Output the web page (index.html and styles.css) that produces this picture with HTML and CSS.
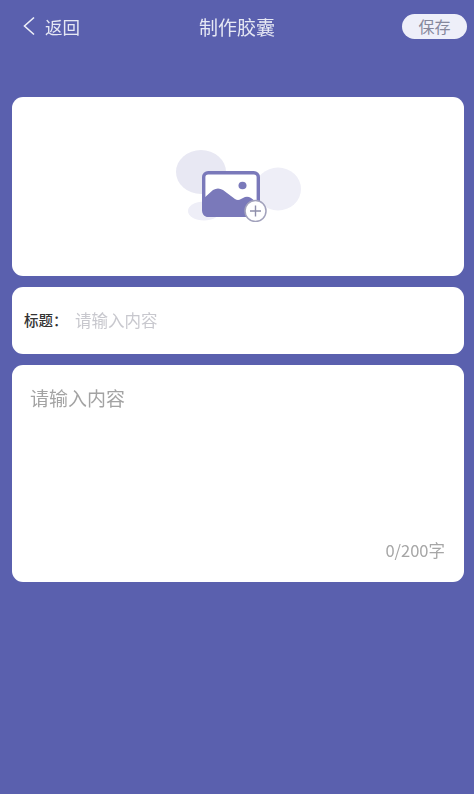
FILE: index.html
```html
<!DOCTYPE html>
<html lang="zh">
<head>
<meta charset="utf-8">
<title>制作胶囊</title>
<link rel="stylesheet" href="styles.css">
</head>
<body>
<div class="page">
  <header class="topbar">
    <div class="back">
      <svg class="back-icon" viewBox="0 0 14 20" width="14" height="20"><path d="M12 1.500 2.500 10l9.500 8.500" fill="none" stroke="#eef0f8" stroke-width="1.600"/></svg>
      <span class="back-text">返回</span>
    </div>
    <div class="title">制作胶囊</div>
    <div class="save">保存</div>
  </header>
  <main class="content">
    <section class="card upload">
      <svg class="upload-icon" viewBox="0 0 128 72" width="128" height="72">
        <ellipse cx="26" cy="22" rx="25" ry="22" fill="#e8e8f3"/>
        <ellipse cx="103" cy="39" rx="23" ry="21.500" fill="#eeeef7"/>
        <ellipse cx="29" cy="61" rx="16" ry="9.500" fill="#eeeef7"/>
        <rect x="28.700" y="22.700" width="54.600" height="42.600" rx="4.500" fill="#fff" stroke="#7a79ba" stroke-width="3.400"/>
        <path d="M28 49 38 40Q43 37 48 40L60 49Q63 51 66 49L70 47Q73 46 76 48L84 54V62A5 5 0 0 1 79 67H33A5 5 0 0 1 28 62Z" fill="#7a79ba"/>
        <ellipse cx="67.500" cy="35.500" rx="4" ry="3.800" fill="#7a79ba"/>
        <circle cx="80.500" cy="61" r="10.500" fill="#fff" stroke="#a2a2bc" stroke-width="1.500"/>
        <path d="M80.500 55.500v11M75 61h11" stroke="#8f8fab" stroke-width="1.400" fill="none"/>
      </svg>
    </section>
    <section class="card title-row">
      <span class="label">标题：</span>
      <span class="placeholder">请输入内容</span>
    </section>
    <section class="card body-input">
      <div class="body-placeholder">请输入内容</div>
      <div class="counter">0/200字</div>
    </section>
  </main>
</div>
</body>
</html>
```
FILE: styles.css
```css
* { box-sizing: border-box; }
html, body { margin: 0; padding: 0; }
body {
  font-family: "Noto Sans CJK SC", "Noto Sans", sans-serif;
  background: #5a60ae;
}
.page {
  width: 474px;
  height: 794px;
  overflow: hidden;
  background: #5a60ae;
}
.topbar {
  height: 97px;
  padding: 14px 7px 0;
  display: grid;
  grid-template-columns: 1fr auto 1fr;
  align-items: start;
}
.back {
  display: flex;
  align-items: center;
  gap: 9px;
  height: 25px;
  padding-left: 15px;
}
.back-icon { display: block; margin-top: -2px; }
.back-text {
  font-size: 17.500px;
  line-height: 25px;
  color: #e6e8f4;
  filter: blur(0.3px);
}
.title {
  font-size: 19px;
  line-height: 25px;
  color: #e6e8f4;
  filter: blur(0.3px);
}
.save {
  justify-self: end;
  width: 65px;
  height: 25px;
  border-radius: 12.500px;
  background: #eeeff9;
  color: #85879c;
  font-size: 16px;
  line-height: 25px;
  text-align: center;
}
.content {
  padding: 0 10px 0 12px;
  display: flex;
  flex-direction: column;
  gap: 11px;
}
.card {
  background: #fff;
  border-radius: 11px;
}
.upload {
  height: 179px;
  display: flex;
  justify-content: center;
  padding: 53px 0 0 0;
}
.upload-icon { display: block; margin-left: 2px; filter: blur(0.5px); }
.title-row {
  height: 67px;
  padding: 0 12px 2px;
  display: flex;
  align-items: center;
}
.label {
  font-size: 14.500px;
  font-weight: 500;
  color: #333;
  width: 51px;
  white-space: nowrap;
}
.placeholder {
  font-size: 16.500px;
  color: #c8c8ce;
  filter: blur(0.3px);
}
.body-input {
  height: 217px;
  padding: 20px 19px 0 18px;
  display: flex;
  flex-direction: column;
}
.body-placeholder {
  font-size: 19px;
  line-height: 26px;
  color: #a3a3a3;
  filter: blur(0.3px);
}
.counter {
  margin-top: auto;
  margin-bottom: 22px;
  align-self: flex-end;
  font-size: 16.500px;
  line-height: 20px;
  color: #a6a6a6;
  filter: blur(0.3px);
}
```
